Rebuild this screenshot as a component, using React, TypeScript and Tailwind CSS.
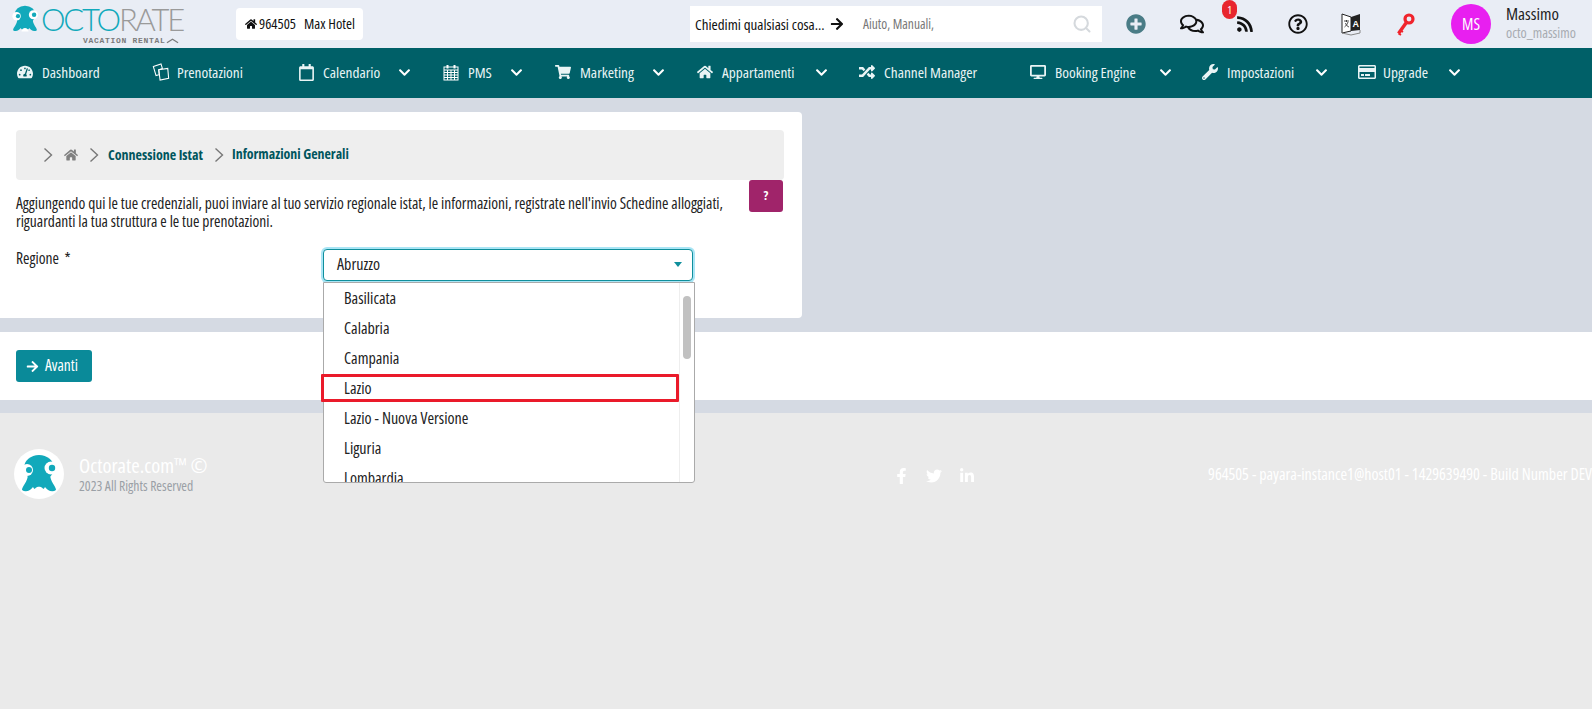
import React from "react";
import {
  FaTachometerAlt, FaRegCalendar, FaShoppingCart, FaHome, FaRandom, FaDesktop, FaWrench, FaRegCreditCard,
  FaChevronDown, FaPlusCircle, FaRegComments, FaRss, FaRegQuestionCircle, FaArrowRight, FaFacebookF, FaTwitter, FaLinkedinIn,
} from "react-icons/fa";
import { Search } from "lucide-react";

const font = "font-['Open_Sans',sans-serif] [font-stretch:75%] whitespace-nowrap";

function Octopus({ className, color = "#12a9bb" }: { className?: string; color?: string }) {
  return (
    <svg viewBox="0 0 40 40" className={className}>
      <ellipse cx="20" cy="14" rx="15" ry="13" fill={color} />
      <path d="M9 20 C9 28 3 32 3 36 C7 39 12 36 14 33 C15 37 25 37 26 33 C28 36 33 39 37 36 C37 32 31 28 31 20 Z" fill={color} />
      <path d="M15 38 C15 31 25 31 25 38 Z" fill="#fff" />
      <circle cx="8" cy="16" r="6" fill="#fff" />
      <circle cx="32" cy="14" r="6.5" fill="#fff" />
      <circle cx="10" cy="16" r="3" fill={color} />
      <circle cx="33" cy="14" r="3.2" fill={color} />
    </svg>
  );
}

function Cards() {
  return (
    <svg viewBox="0 0 20 20" className="w-[18px] h-[18px]" fill="none" stroke="#fff" strokeWidth="1.2">
      <path d="M1.5 4 L10 1 L11.5 6 L7.5 7.5 L8 13 L4.5 14 Z" />
      <path d="M7.5 7.5 L17.5 6 L18.5 17 L9 19 Z" />
    </svg>
  );
}

function GridCal() {
  return (
    <svg viewBox="0 0 16 16" className="w-[16px] h-[17px]" fill="none" stroke="#fff" strokeWidth="1">
      <rect x="1" y="2.5" width="14" height="13" />
      <path d="M1 5.5 H15 M1 8 H15 M1 10.5 H15 M1 13 H15 M4.5 5.5 V15.5 M8 5.5 V15.5 M11.5 5.5 V15.5" />
      <path d="M4.5 0.5 V4 M11.5 0.5 V4" strokeWidth="2" />
    </svg>
  );
}

function Translate() {
  return (
    <svg viewBox="0 0 20 24" className="w-[20px] h-[24px]">
      <path d="M1 2 L10 5 L10 19 L1 21 Z" fill="#fff" stroke="#222" strokeWidth="1" />
      <path d="M10 5 L19 2 L19 18 L10 19 Z" fill="#222" />
      <path d="M1 21 L10 23 L19 21 V18" fill="none" stroke="#888" strokeWidth="1" />
      <text x="11.5" y="15" fontSize="9" fontWeight="700" fill="#fff" fontFamily="Liberation Sans">A</text>
      <path d="M3 9 H8 M5.5 8 V10 M7 10 C6.5 12 5 14 3.5 15 M4.5 11 C5 13 6.5 14.5 8 15" fill="none" stroke="#222" strokeWidth="0.8" />
    </svg>
  );
}

function RedKey() {
  return (
    <svg viewBox="0 0 20 24" className="w-[20px] h-[24px]">
      <circle cx="14" cy="7" r="4" fill="none" stroke="#f0242c" strokeWidth="3.2" />
      <path d="M11 11 L3.5 21.5" stroke="#f0242c" strokeWidth="3.4" fill="none" />
      <path d="M5.5 18.5 L8 20 M3.5 21.5 L6 23" stroke="#f0242c" strokeWidth="2" fill="none" />
    </svg>
  );
}

type Item = { icon: React.ReactNode; label: string; w: string; lw: string; chev: boolean };
const ic = "w-[16px] h-[16px]";
const items: Item[] = [
  { icon: <FaTachometerAlt className={ic} />, label: "Dashboard", w: "w-[135px]", lw: "w-[80px]", chev: false },
  { icon: <Cards />, label: "Prenotazioni", w: "w-[146px]", lw: "w-[90px]", chev: false },
  { icon: <FaRegCalendar className="w-[17px] h-[17px]" />, label: "Calendario", w: "w-[145px]", lw: "w-[75px]", chev: true },
  { icon: <GridCal />, label: "PMS", w: "w-[112px]", lw: "w-[42px]", chev: true },
  { icon: <FaShoppingCart className={ic} />, label: "Marketing", w: "w-[142px]", lw: "w-[72px]", chev: true },
  { icon: <FaHome className={ic} />, label: "Appartamenti", w: "w-[162px]", lw: "w-[93px]", chev: true },
  { icon: <FaRandom className={ic} />, label: "Channel Manager", w: "w-[171px]", lw: "w-[120px]", chev: false },
  { icon: <FaDesktop className={ic} />, label: "Booking Engine", w: "w-[172px]", lw: "w-[104px]", chev: true },
  { icon: <FaWrench className={ic} />, label: "Impostazioni", w: "w-[156px]", lw: "w-[88px]", chev: true },
  { icon: <FaRegCreditCard className="w-[18px] h-[18px]" />, label: "Upgrade", w: "w-[120px]", lw: "w-[65px]", chev: true },
];

const regions = ["Basilicata", "Calabria", "Campania", "Lazio", "Lazio - Nuova Versione", "Liguria", "Lombardia"];

export default function App() {
  return (
    <div className={`${font} w-[1592px] h-[709px] overflow-hidden bg-[#eaeaea] text-[14px] text-[#111] flex flex-col`}>
      <header className="h-[48px] bg-[#e9edf5] flex items-center shrink-0">
        <div className="w-[236px] pl-[11px] flex flex-col items-start [font-stretch:100%]">
          <div className="flex items-center h-[33px]">
            <Octopus className="w-[28px] h-[32px]" />
            <span className="font-['Lato',sans-serif] font-light text-[31px] leading-none tracking-[-2.2px] ml-[2px] text-[#12a9bb]">OCTO</span>
            <span className="font-['Lato',sans-serif] font-light text-[31px] leading-none tracking-[-2.2px] text-[#9a9a9a]">RATE</span>
          </div>
          <div className="ml-[72px] flex items-center">
            <span className="font-['Liberation_Mono',monospace] font-bold text-[8px] leading-[10px] tracking-[0.7px] text-[#7b7b7b]">VACATION RENTAL</span>
            <svg viewBox="0 0 14 6" className="w-[13px] h-[6px]" fill="none" stroke="#7b7b7b" strokeWidth="1.3"><path d="M1 5 L7 1 L13 5" /></svg>
          </div>
        </div>
        <div className="w-[127px] h-[32px] bg-white rounded-[4px] flex items-center pl-[9px] text-[14.5px]">
          <FaHome className="w-[12px] h-[12px] mr-[2px]" />
          <span>964505</span>
          <span className="ml-[8px]">Max Hotel</span>
        </div>
        <div className="ml-[327px] w-[412px] h-[36px] bg-white flex items-center pl-[5px] pr-[10px]">
          <span className="text-[15px] w-[133px]">Chiedimi qualsiasi cosa...</span>
          <FaArrowRight className="w-[14px] h-[14px] ml-[2px]" />
          <span className="ml-[19px] text-[#777] text-[13.5px]">Aiuto, Manuali,</span>
          <Search strokeWidth={2.5} className="ml-auto w-[20px] h-[20px] text-[#d5d9dd]" />
        </div>
        <FaPlusCircle className="ml-[24px] w-[20px] h-[20px] text-[#4a7c86]" />
        <FaRegComments className="ml-[34px] w-[24px] h-[24px] text-[#111]" />
        <div className="relative ml-[32px] w-[19px] h-[18px]">
          <FaRss className="w-[18px] h-[18px] text-[#111]" />
          <span className="absolute -top-[15px] -left-[14px] w-[15px] h-[19px] rounded-full bg-[#e8262e] text-white text-[11px] leading-[19px] text-center">1</span>
        </div>
        <FaRegQuestionCircle className="ml-[33px] w-[20px] h-[20px] text-[#111]" />
        <div className="ml-[33px] h-[24px]"><Translate /></div>
        <div className="ml-[34px] h-[24px]"><RedKey /></div>
        <div className="ml-[36px] w-[40px] h-[40px] rounded-full bg-[#e81ff0] text-white text-[16px] font-medium flex items-center justify-center">MS</div>
        <div className="ml-[15px] flex flex-col -mt-[3px]">
          <span className="text-[17px] leading-[20px] text-[#222]">Massimo</span>
          <span className="text-[14px] leading-[17px] text-[#a7abb1]">octo_massimo</span>
        </div>
      </header>

      <nav className="h-[50px] bg-[#006068] text-[#e9f4f5] flex items-center pl-[17px] pb-[2px] text-[15.3px] shrink-0">
        {items.map((it) => (
          <div key={it.label} className={`${it.w} flex items-center shrink-0`}>
            <span className="w-[25px] flex items-center">{it.icon}</span>
            <span className={`${it.lw}`}>{it.label}</span>
            {it.chev && <FaChevronDown className="w-[13px] h-[13px] text-white" />}
          </div>
        ))}
      </nav>

      <main className="h-[315px] bg-[#d5dae3] pt-[14px] shrink-0">
        <div className="relative w-[802px] h-[206px] bg-white rounded-r-[4px] px-[16px] pt-[18px]">
          <div className="h-[50px] w-[768px] bg-[#eeeeee] rounded-[4px] flex items-center pl-[27px] pb-[1px] text-[#777]">
            <Chevron />
            <FaHome className="ml-[11px] w-[14px] h-[14px] text-[#808080]" />
            <span className="ml-[11px] flex"><Chevron /></span>
            <span className="ml-[9px] font-bold text-[14px] text-[#00555d]">Connessione Istat</span>
            <span className="ml-[11px] flex"><Chevron /></span>
            <span className="ml-[8px] font-bold text-[13.9px] text-[#00555d]">Informazioni Generali</span>
          </div>
          <p className="mt-[14px] w-[720px] text-[15.5px] leading-[18px] text-[#222] whitespace-normal">
            Aggiungendo qui le tue credenziali, puoi inviare al tuo servizio regionale istat, le informazioni, registrate nell'invio Schedine alloggiati, riguardanti la tua struttura e le tue prenotazioni.
          </p>
          <div className="absolute left-[749px] top-[68px] w-[34px] h-[32px] bg-[#a0246a] rounded-[3px] text-white text-[13px] font-bold flex items-center justify-center">?</div>
          <div className="mt-[19px] flex items-start">
            <span className="w-[307px] text-[15.5px] leading-[18px] text-[#222]">Regione&nbsp; *</span>
            <div className="relative w-[370px] h-[32px] bg-white border border-[#0f8f9c] rounded-[4px] ring-2 ring-[#a9e5f5] flex items-center pl-[13px] pb-[2px] text-[16px] text-[#222]">
              Abruzzo
              <span className="ml-auto mr-[10px] w-0 h-0 border-x-[4px] border-x-transparent border-t-[5px] border-t-[#0f8f9c]" />
              <div className="absolute z-10 -left-[1px] top-[32px] w-[372px] h-[201px] bg-white border border-[#aaa] overflow-hidden flex rounded-b-[3px]">
                <ul className="flex-1">
                  {regions.map((r) => (
                    <li key={r} className="relative h-[30px] pl-[20px] flex items-center text-[16px] text-[#222]">
                      {r}
                    </li>
                  ))}
                </ul>
                <div className="w-[15px] border-l border-[#eeeeee] relative">
                  <div className="absolute top-[13px] left-[3px] w-[8px] h-[63px] bg-[#c1c1c1] rounded-full" />
                </div>
              </div>
              <span className="absolute z-20 -left-[3px] top-[124px] w-[358px] h-[28px] border-[3px] border-[#ea1a2a] rounded-[1px]" />
            </div>
          </div>
        </div>
        <div className="mt-[14px] h-[68px] bg-white flex items-center pl-[16px]">
          <button className="h-[32px] w-[76px] bg-[#0a8a99] rounded-[3px] text-white text-[15.5px] flex items-center pl-[10px]">
            <FaArrowRight className="w-[13px] h-[13px] mr-[6px]" />
            Avanti
          </button>
        </div>
      </main>

      <footer className="relative flex items-start h-[296px] pt-[36px] pl-[14px] text-white">
        <div className="w-[50px] h-[50px] rounded-full bg-white flex items-center justify-center shrink-0">
          <Octopus className="w-[40px] h-[40px]" />
        </div>
        <div className="ml-[15px] w-[140px] mt-[4px] flex flex-col">
          <span className="text-[20.5px] leading-[24px] text-white">Octorate.com™ ©</span>
          <span className="text-[13.7px] leading-[17px] text-[#9aa0a6]">2023 All Rights Reserved</span>
        </div>
        <div className="ml-[677px] mt-[19px] flex items-center gap-[17px]">
          <FaFacebookF className="w-[15px] h-[16px]" />
          <FaTwitter className="w-[16px] h-[16px]" />
          <FaLinkedinIn className="w-[16px] h-[16px]" />
        </div>
        <div className="ml-[233px] mt-[13px] text-[16px]">964505 - payara-instance1@host01 - 1429639490 - Build Number DEV</div>
      </footer>
    </div>
  );
}

function Chevron() {
  return (
    <svg viewBox="0 0 10 16" className="inline-block w-[10px] h-[16px]" fill="none" stroke="#777" strokeWidth="1.4">
      <path d="M1.5 1.5 L8.5 8 L1.5 14.5" />
    </svg>
  );
}
